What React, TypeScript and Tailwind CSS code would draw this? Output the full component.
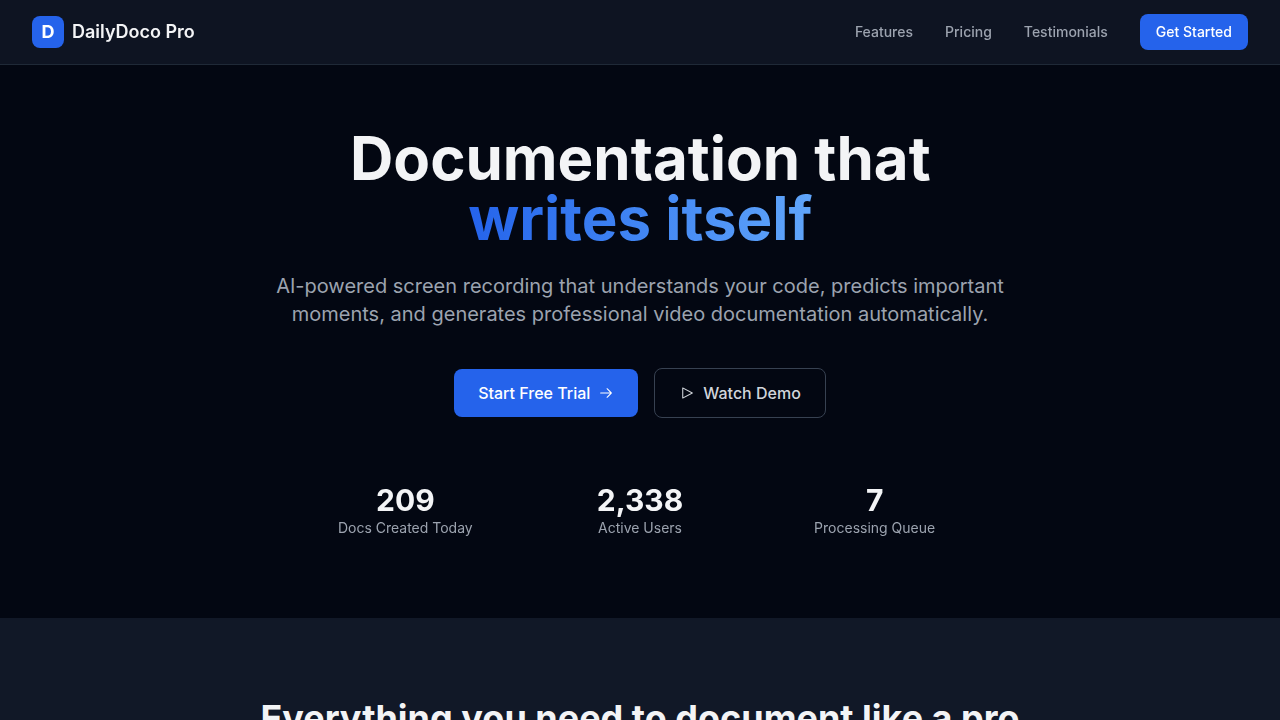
const navLinks = ["Features", "Pricing", "Testimonials"];

const stats = [
  { value: "209", label: "Docs Created Today" },
  { value: "2,338", label: "Active Users" },
  { value: "7", label: "Processing Queue" },
];

function ArrowRightIcon() {
  return (
    <svg className="h-4 w-4" viewBox="0 0 15 15" fill="none">
      <path
        d="M8.14645 3.14645C8.34171 2.95118 8.65829 2.95118 8.85355 3.14645L12.8536 7.14645C13.0488 7.34171 13.0488 7.65829 12.8536 7.85355L8.85355 11.8536C8.65829 12.0488 8.34171 12.0488 8.14645 11.8536C7.95118 11.6583 7.95118 11.3417 8.14645 11.1464L11.2929 8H2.5C2.22386 8 2 7.77614 2 7.5C2 7.22386 2.22386 7 2.5 7H11.2929L8.14645 3.85355C7.95118 3.65829 7.95118 3.34171 8.14645 3.14645Z"
        fill="currentColor"
        fillRule="evenodd"
        clipRule="evenodd"
      />
    </svg>
  );
}

function PlayIcon() {
  return (
    <svg className="h-4 w-4" viewBox="0 0 15 15" fill="none">
      <path
        d="M3.24182 2.32181C3.3919 2.23132 3.5784 2.22601 3.73338 2.30781L12.7334 7.05781C12.8974 7.14436 13 7.31457 13 7.5C13 7.68543 12.8974 7.85564 12.7334 7.94219L3.73338 12.6922C3.5784 12.774 3.3919 12.7687 3.24182 12.6782C3.09175 12.5877 3 12.4252 3 12.25V2.75C3 2.57476 3.09175 2.4123 3.24182 2.32181ZM4 3.57925V11.4207L11.4288 7.5L4 3.57925Z"
        fill="currentColor"
        fillRule="evenodd"
        clipRule="evenodd"
      />
    </svg>
  );
}

function Header() {
  return (
    <header className="fixed inset-x-0 top-0 z-50 border-b border-[#1f2937] bg-[#111827]/80 backdrop-blur-md">
      <div className="flex h-16 items-center justify-between px-8">
        <div className="flex items-center gap-2">
          <div className="flex h-8 w-8 items-center justify-center rounded-lg bg-[#2563eb] text-lg font-bold text-white">
            D
          </div>
          <span className="text-lg font-semibold text-[#f3f4f6]">DailyDoco Pro</span>
        </div>
        <nav className="flex items-center gap-8 text-sm font-medium text-[#9ca3af]">
          {navLinks.map((link) => (
            <a key={link} href="#">
              {link}
            </a>
          ))}
          <button className="rounded-lg bg-[#2563eb] px-4 py-2 text-white">Get Started</button>
        </nav>
      </div>
    </header>
  );
}

function Hero() {
  return (
    <section className="flex flex-col items-center px-8 pt-32 pb-20 text-center">
      <h1 className="text-6xl leading-none font-bold text-[#f3f4f6] will-change-transform">
        Documentation that
        <br />
        <span className="bg-linear-to-r from-[#2563eb] to-[#60a5fa] bg-clip-text text-transparent">
          writes itself
        </span>
      </h1>
      <p className="mt-6 max-w-3xl text-xl text-[#9ca3af]">
        AI-powered screen recording that understands your code, predicts important moments, and
        generates professional video documentation automatically.
      </p>
      <div className="mt-10 flex items-center gap-4 font-medium">
        <button className="flex items-center gap-2 rounded-lg bg-[#2563eb] px-6 py-3 text-white">
          Start Free Trial
          <ArrowRightIcon />
        </button>
        <button className="flex items-center gap-2 rounded-lg border border-[#374151] px-6 py-3 text-[#d1d5db]">
          <PlayIcon />
          Watch Demo
        </button>
      </div>
      <div className="mt-16 grid w-full max-w-2xl grid-cols-3 gap-8 will-change-transform">
        {stats.map((stat) => (
          <div key={stat.label}>
            <div className="text-3xl font-bold text-[#f3f4f6]">{stat.value}</div>
            <div className="text-sm text-[#9ca3af]">{stat.label}</div>
          </div>
        ))}
      </div>
    </section>
  );
}

export default function App() {
  return (
    <div className="h-screen overflow-hidden bg-[#030712] font-['Inter',sans-serif]">
      <Header />
      <Hero />
      <section className="h-64 bg-[#111827] pt-20 text-center">
        <h2 className="text-4xl font-bold text-[#f3f4f6]">
          Everything you need to document like a pro
        </h2>
      </section>
    </div>
  );
}
